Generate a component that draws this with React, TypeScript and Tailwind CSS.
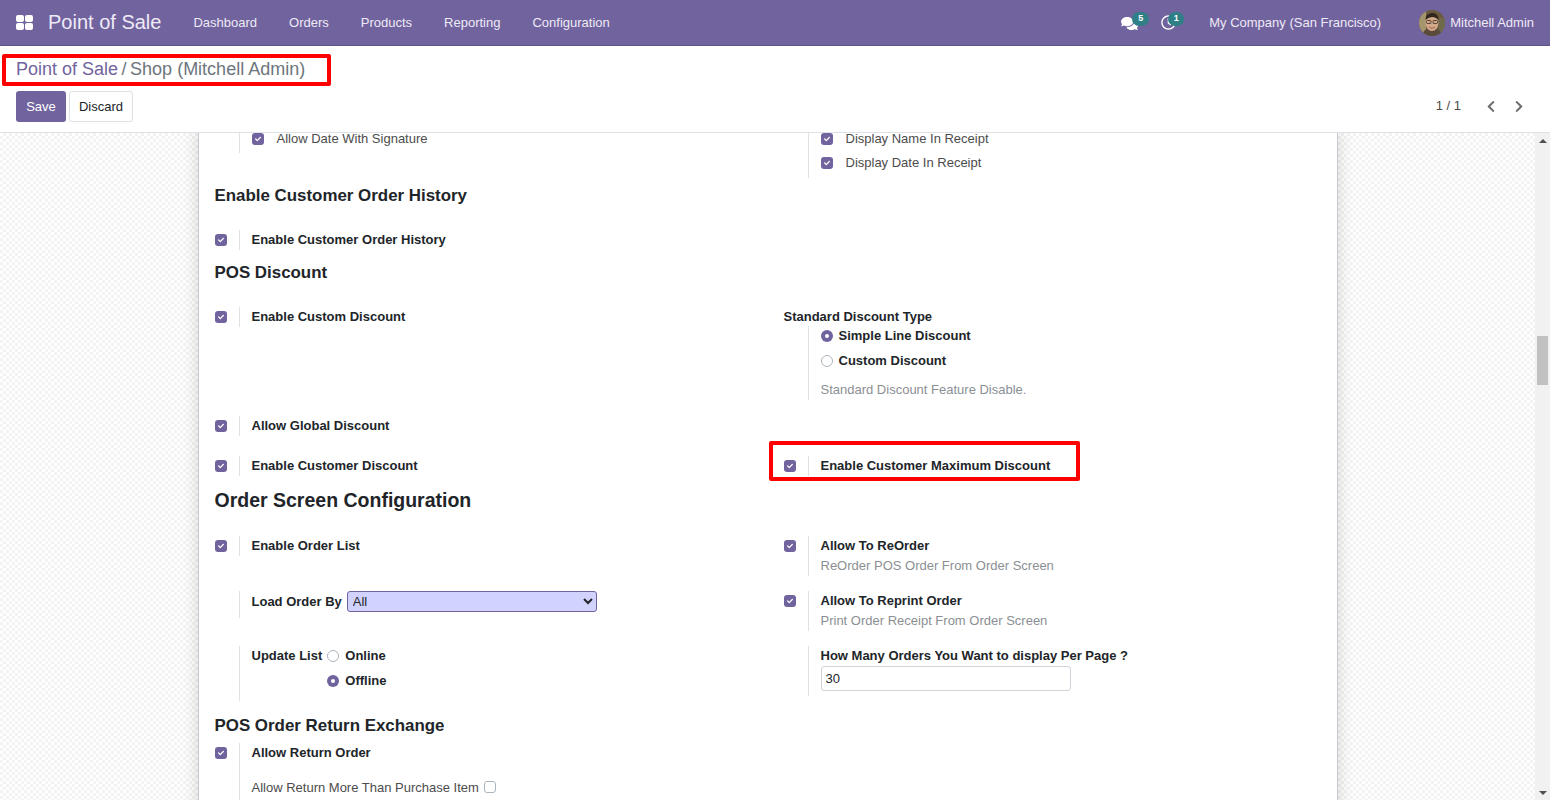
import type { ReactNode } from "react";
import { FaComments, FaRegClock, FaChevronLeft, FaChevronRight, FaCheck } from "react-icons/fa";

const navItems = ["Dashboard", "Orders", "Products", "Reporting", "Configuration"];

function Check({ on = true }: { on?: boolean }) {
  if (!on) {
    return <span className="inline-block w-3 h-3 rounded-[3px] border border-[#adb5bd] bg-white" />;
  }
  return (
    <span className="flex w-3 h-3 items-center justify-center rounded-[3px] bg-[#71639e] text-white">
      <FaCheck className="w-[6px] h-[6px]" />
    </span>
  );
}

function Radio({ on = false }: { on?: boolean }) {
  return on ? (
    <span className="flex w-3 h-3 shrink-0 items-center justify-center rounded-full bg-[#71639e]">
      <span className="w-1 h-1 rounded-full bg-white" />
    </span>
  ) : (
    <span className="inline-block w-3 h-3 shrink-0 rounded-full border border-[#adb5bd] bg-white" />
  );
}

function Setting({ check = true, height, children }: { check?: boolean; height: string; children: ReactNode }) {
  return (
    <div className="flex">
      <div className="w-6 shrink-0 pt-1">{check && <Check />}</div>
      <div className={`border-l border-[#dee2e6] pl-3 ${height}`}>{children}</div>
    </div>
  );
}

function Row({ className = "", left, right }: { className?: string; left?: ReactNode; right?: ReactNode }) {
  return (
    <div className={`grid grid-cols-[569px_1fr] ${className}`}>
      <div>{left}</div>
      <div>{right}</div>
    </div>
  );
}

function Muted({ children }: { children: ReactNode }) {
  return <div className="text-[#8b8f94]">{children}</div>;
}

function CheckLine({ children }: { children: ReactNode }) {
  return (
    <div className="flex h-6 text-[#4c4c4c]">
      <span className="pt-1 mr-[13px]"><Check /></span>
      {children}
    </div>
  );
}

function Avatar() {
  return (
    <svg viewBox="0 0 26 26" className="w-[26px] h-[26px] rounded-full">
      <rect width="26" height="26" fill="#6b5a3e" />
      <rect x="0" y="0" width="7" height="26" fill="#a5956c" />
      <rect x="20" y="8" width="6" height="18" fill="#6f6a4c" />
      <path d="M3 26c1-6 5-8 10-8s9 2 10 8z" fill="#5a4a3c" />
      <ellipse cx="13" cy="13" rx="6.5" ry="8" fill="#d3a888" />
      <path d="M6.5 10c0-5 3-7 7-7s6 3 6 7c-2-2-4-3-6-3s-5 1-7 3z" fill="#2f261f" />
      <rect x="7.5" y="10.5" width="4.5" height="3" rx="1" fill="none" stroke="#2d2a28" strokeWidth="0.8" />
      <rect x="14" y="10.5" width="4.5" height="3" rx="1" fill="none" stroke="#2d2a28" strokeWidth="0.8" />
      <path d="M10 17c2 1.5 4 1.5 6 0" fill="none" stroke="#8a5a48" strokeWidth="0.8" />
    </svg>
  );
}

export default function App() {
  return (
    <div className="relative flex flex-col w-full h-[800px] overflow-hidden bg-white text-[13px] leading-[19.5px] text-[#212529] font-['Liberation_Sans',sans-serif]">
      {/* Top bar */}
      <header className="flex items-center h-[46px] shrink-0 bg-[#71639e] border-b border-[#5f5387] text-[#eeeaf6]">
        <div className="grid grid-cols-2 gap-[1px] w-[17px] h-[15px] ml-4">
          <span className="rounded-[2px] bg-white" />
          <span className="rounded-[2px] bg-white" />
          <span className="rounded-[2px] bg-white" />
          <span className="rounded-[2px] bg-white" />
        </div>
        <span className="ml-[15px] mr-4 text-[20px]">Point of Sale</span>
        <nav className="flex">
          {navItems.map((item) => (
            <a key={item} className="px-4">
              {item}
            </a>
          ))}
        </nav>
        <div className="flex items-center ml-auto">
          <div className="relative w-[41px] h-[20px]">
            <FaComments className="absolute left-0 top-[2px] w-[17px] h-[17px] text-white" />
            <span className="absolute left-[11px] -top-[1px] flex w-[17px] h-[14px] items-center justify-center rounded-full bg-[#2f7f86] text-[9px] font-bold text-white">5</span>
          </div>
          <div className="relative w-[47px] h-[20px]">
            <FaRegClock className="absolute -left-[1px] top-[2px] w-[15px] h-[15px] text-white" />
            <span className="absolute left-[6px] -top-[1px] flex w-[16px] h-[14px] items-center justify-center rounded-full bg-[#2f7f86] text-[9px] font-bold text-white">1</span>
          </div>
          <span>My Company (San Francisco)</span>
          <span className="ml-[38px]">
            <Avatar />
          </span>
          <span className="ml-[5px] mr-4">Mitchell Admin</span>
        </div>
      </header>

      {/* Control panel */}
      <div className="shrink-0 h-[87px] border-b border-[#dee2e6] bg-white pl-4 pr-[26px]">
        <div className="pt-[10px] h-[45px] text-[18px] leading-[27px] text-[#6c757d]">
          <span className="text-[#71639e]">Point of Sale</span>
          <span className="mx-[3.5px]">/</span>
          <span>Shop (Mitchell Admin)</span>
        </div>
        <div className="flex items-center">
          <button className="w-[50px] h-[31px] rounded-[3px] bg-[#71639e] text-white">Save</button>
          <button className="w-[64px] h-[31px] ml-[3px] rounded-[3px] border border-[#dee2e6] bg-white">Discard</button>
          <span className="ml-auto -mt-[1px] text-[#4c4c4c]">1 / 1</span>
          <FaChevronLeft className="ml-[25px] -mt-[1px] w-[10px] h-[13px] text-[#6c6c6c]" />
          <FaChevronRight className="ml-[18px] -mt-[1px] w-[10px] h-[13px] text-[#6c6c6c]" />
        </div>
      </div>

      {/* Form area */}
      <div className="flex flex-1 min-h-0">
        <div className="flex-1 min-w-0 overflow-hidden bg-[repeating-conic-gradient(#f3f3f3_0_25%,#ffffff_0_50%)] bg-[length:6px_6px]">
          <div className="ml-[198px] w-[1140px] h-[700px] -mt-[4px] bg-white border-x border-[#c9c9d1] shadow-[0_0_16px_rgba(0,0,0,0.16)] pl-[15.5px]">
            <Row
              className="h-[49px]"
              left={
                <Setting check={false} height="h-[24px]">
                  <CheckLine>Allow Date With Signature</CheckLine>
                </Setting>
              }
              right={
                <Setting check={false} height="h-[49px]">
                  <CheckLine>Display Name In Receipt</CheckLine>
                  <CheckLine>Display Date In Receipt</CheckLine>
                </Setting>
              }
            />
            <h2 className="flex items-center h-[34px] pt-[2px] text-[16.9px] font-bold">Enable Customer Order History</h2>
            <Row className="mt-[18px]" left={<Setting height="h-5"><b>Enable Customer Order History</b></Setting>} />
            <h2 className="flex items-center h-[46px] text-[16.9px] font-bold">POS Discount</h2>
            <Row
              className="mt-[11px]"
              left={<Setting height="h-5"><b>Enable Custom Discount</b></Setting>}
              right={
                <div>
                  <div className="h-[19px] font-bold">Standard Discount Type</div>
                  <div className="ml-6 h-[74px] border-l border-[#dee2e6] pl-3">
                    <div className="flex items-center gap-[6px] h-[19px] font-bold"><Radio on />Simple Line Discount</div>
                    <div className="flex items-center gap-[6px] h-[19px] mt-[6px] font-bold"><Radio />Custom Discount</div>
                    <div className="mt-[10px]"><Muted>Standard Discount Feature Disable.</Muted></div>
                  </div>
                </div>
              }
            />
            <Row className="mt-4" left={<Setting height="h-5"><b>Allow Global Discount</b></Setting>} />
            <Row
              className="mt-5"
              left={<Setting height="h-5"><b>Enable Customer Discount</b></Setting>}
              right={<Setting height="h-5"><b>Enable Customer Maximum Discount</b></Setting>}
            />
            <h1 className="flex items-center h-[50px] text-[19.5px] font-bold">Order Screen Configuration</h1>
            <Row
              className="mt-[10px]"
              left={<Setting height="h-5"><b>Enable Order List</b></Setting>}
              right={
                <Setting height="h-10">
                  <b>Allow To ReOrder</b>
                  <Muted>ReOrder POS Order From Order Screen</Muted>
                </Setting>
              }
            />
            <Row
              className="mt-[15px]"
              left={
                <Setting check={false} height="h-[27px]">
                  <div className="flex items-center gap-[5px] h-[21px]">
                    <b>Load Order By</b>
                    <select className="w-[250px] h-[21px] pl-[1px] rounded-[3px] border border-[#71639e] bg-[#d2d2ff] text-[13px]">
                      <option>All</option>
                    </select>
                  </div>
                </Setting>
              }
              right={
                <Setting height="h-10">
                  <b>Allow To Reprint Order</b>
                  <Muted>Print Order Receipt From Order Screen</Muted>
                </Setting>
              }
            />
            <Row
              className="mt-[15px]"
              left={
                <Setting check={false} height="h-[55px]">
                  <div className="flex">
                    <b className="mr-[5px]">Update List</b>
                    <div>
                      <div className="flex items-center gap-[6px] h-5 font-bold"><Radio />Online</div>
                      <div className="flex items-center gap-[6px] h-5 mt-[5px] font-bold"><Radio on />Offline</div>
                    </div>
                  </div>
                </Setting>
              }
              right={
                <Setting check={false} height="h-[50px]">
                  <b>How Many Orders You Want to display Per Page ?</b>
                  <input defaultValue="30" className="block w-[250px] h-[25px] px-[4px] rounded-[3px] border border-[#ced4da] bg-white" />
                </Setting>
              }
            />
            <h2 className="flex items-center h-[42px] pt-[7px] text-[16.9px] font-bold">POS Order Return Exchange</h2>
            <Row
              left={
                <Setting height="h-[70px]">
                  <b>Allow Return Order</b>
                  <div className="flex items-center gap-[5px] mt-[15px] text-[#4c4c4c]">
                    Allow Return More Than Purchase Item <Check on={false} />
                  </div>
                </Setting>
              }
            />
          </div>
        </div>

        {/* Scrollbar */}
        <div className="flex flex-col items-center w-[15px] shrink-0 bg-[#f1f1f1]">
          <span className="mt-[6px] w-0 h-0 border-x-[4px] border-x-transparent border-b-[4px] border-b-[#505050]" />
          <span className="mt-[193px] w-[11px] h-[49px] bg-[#c1c1c1]" />
          <span className="mt-auto mb-[5px] w-0 h-0 border-x-[4px] border-x-transparent border-t-[4px] border-t-[#505050]" />
        </div>
      </div>

      {/* Annotation boxes */}
      <div className="absolute left-[2px] top-[54px] w-[329px] h-[32px] border-4 border-[#ff0000] rounded-[2px]" />
      <div className="absolute left-[769px] top-[441px] w-[311px] h-[40px] border-4 border-[#ff0000] rounded-[2px]" />
    </div>
  );
}
